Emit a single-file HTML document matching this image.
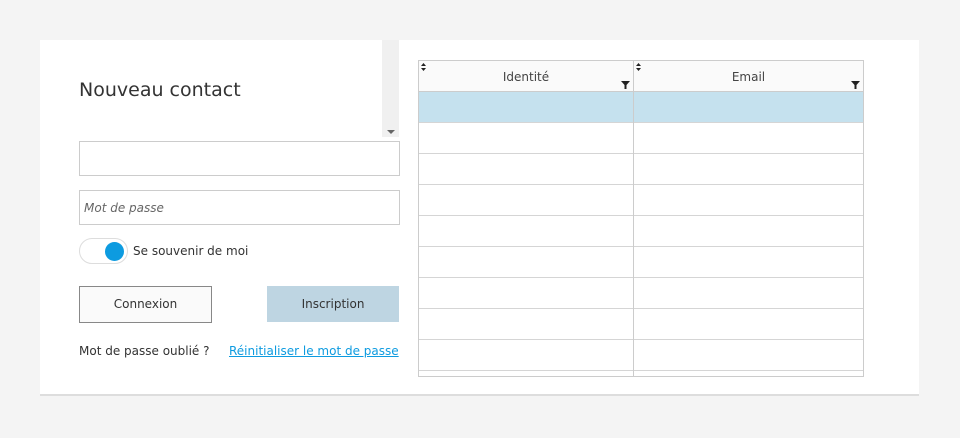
<!DOCTYPE html><html><head><style>
body{margin:0;width:960px;height:438px;background:#f4f4f4;font-family:"DejaVu Sans",sans-serif;position:relative;overflow:hidden;color:#333}
.a{position:absolute;box-sizing:border-box}
.card{left:40px;top:40px;width:879px;height:356px;background:#fff;border-bottom:2px solid #ddd}
.inp{border:1px solid #ccc;background:#fff;left:79px;width:321px;height:35px}
.row{left:419px;width:444px;height:31px;border-bottom:1px solid #d5d5d5}
</style></head><body>
<div class="a card"></div>
<div class="a" style="left:382px;top:40px;width:17px;height:97px;background:#f0f0f0"></div>
<div class="a" style="left:387px;top:130px;width:0;height:0;border-left:4px solid transparent;border-right:4px solid transparent;border-top:4px solid #666"></div>
<div class="a" style="left:79px;top:79px;font-size:19px;color:#333">Nouveau contact</div>
<div class="a inp" style="top:141px"></div>
<div class="a inp" style="top:190px"><span style="position:absolute;left:4px;top:10px;font-size:12px;font-style:italic;color:#666">Mot de passe</span></div>
<div class="a" style="left:79px;top:238px;width:49px;height:26px;border:1px solid #ddd;border-radius:13px;background:#fff"></div>
<div class="a" style="left:105px;top:242px;width:19px;height:19px;border-radius:50%;background:#0d9be0"></div>
<div class="a" style="left:133px;top:244px;font-size:12px">Se souvenir de moi</div>
<div class="a" style="left:79px;top:286px;width:133px;height:37px;border:1px solid #888;background:#fafafa;font-size:12px;text-align:center;line-height:35px">Connexion</div>
<div class="a" style="left:267px;top:286px;width:132px;height:36px;background:#bed5e2;font-size:12px;text-align:center;line-height:36px">Inscription</div>
<div class="a" style="left:79px;top:344px;font-size:12px">Mot de passe oublié ?</div>
<div class="a" style="left:229px;top:344px;font-size:12px;color:#0d9be0;text-decoration:underline">Réinitialiser le mot de passe</div>
<div class="a" style="left:418px;top:60px;width:446px;height:317px;border:1px solid #ccc;background:#fff"></div>
<div class="a" style="left:419px;top:61px;width:444px;height:31px;background:#fafafa;border-bottom:1px solid #ccc"></div>
<div class="a" style="left:419px;top:92px;width:444px;height:31px;background:#c5e1ee;border-bottom:1px solid #d5d5d5"></div>
<div class="a row" style="top:123px"></div><div class="a row" style="top:154px"></div><div class="a row" style="top:185px"></div><div class="a row" style="top:216px"></div><div class="a row" style="top:247px"></div><div class="a row" style="top:278px"></div><div class="a row" style="top:309px"></div><div class="a row" style="top:340px"></div>
<div class="a" style="left:633px;top:61px;width:1px;height:315px;background:#ccc"></div>
<div class="a" style="left:419px;top:70px;width:214px;text-align:center;font-size:12px;color:#444">Identité</div>
<div class="a" style="left:634px;top:70px;width:229px;text-align:center;font-size:12px;color:#444">Email</div>
<svg class="a" style="left:421px;top:63px" width="5" height="8"><path d="M0 3L2.5 0L5 3ZM0 5L2.5 8L5 5Z" fill="#222"/></svg>
<svg class="a" style="left:636px;top:63px" width="5" height="8"><path d="M0 3L2.5 0L5 3ZM0 5L2.5 8L5 5Z" fill="#222"/></svg>
<svg class="a" style="left:621px;top:81px" width="9" height="8"><path d="M0 0H9L5.5 4V8H3.5V4Z" fill="#222"/></svg>
<svg class="a" style="left:851px;top:81px" width="9" height="8"><path d="M0 0H9L5.5 4V8H3.5V4Z" fill="#222"/></svg>
</body></html>
